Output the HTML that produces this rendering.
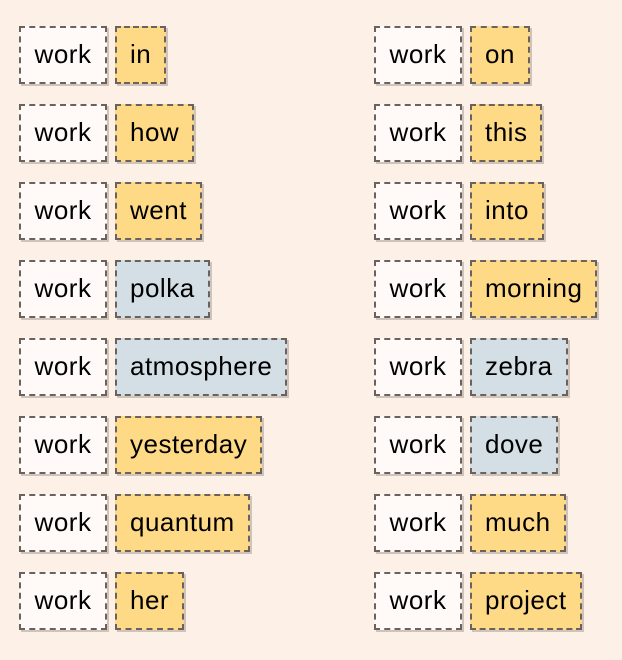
<!DOCTYPE html>
<html><head><style>
body{margin:0;width:622px;height:660px;background:#fdf0e6;font-family:"Liberation Sans",sans-serif;position:relative;overflow:hidden}
.col{position:absolute;top:26px}
.row{height:58px;margin-bottom:20px;display:flex;gap:8px}
.b{box-sizing:border-box;height:58px;line-height:52px;border:2px dashed #6a625e;padding:0 13px;font-size:26px;letter-spacing:0.5px;color:#000;box-shadow:2px 2px 0 #cfc3ba;white-space:nowrap}
.w{background:#fffaf7;width:88px;text-align:center;padding:0}
.y{background:#fed986}
.g{background:#d3dfe5}
</style></head><body>
<div class="col" style="left:19px">
<div class="row"><div class="b w">work</div><div class="b y">in</div></div>
<div class="row"><div class="b w">work</div><div class="b y">how</div></div>
<div class="row"><div class="b w">work</div><div class="b y">went</div></div>
<div class="row"><div class="b w">work</div><div class="b g">polka</div></div>
<div class="row"><div class="b w">work</div><div class="b g">atmosphere</div></div>
<div class="row"><div class="b w">work</div><div class="b y">yesterday</div></div>
<div class="row"><div class="b w">work</div><div class="b y">quantum</div></div>
<div class="row"><div class="b w">work</div><div class="b y">her</div></div>
</div>
<div class="col" style="left:374px">
<div class="row"><div class="b w">work</div><div class="b y">on</div></div>
<div class="row"><div class="b w">work</div><div class="b y">this</div></div>
<div class="row"><div class="b w">work</div><div class="b y">into</div></div>
<div class="row"><div class="b w">work</div><div class="b y">morning</div></div>
<div class="row"><div class="b w">work</div><div class="b g">zebra</div></div>
<div class="row"><div class="b w">work</div><div class="b g">dove</div></div>
<div class="row"><div class="b w">work</div><div class="b y">much</div></div>
<div class="row"><div class="b w">work</div><div class="b y">project</div></div>
</div>
</body></html>
